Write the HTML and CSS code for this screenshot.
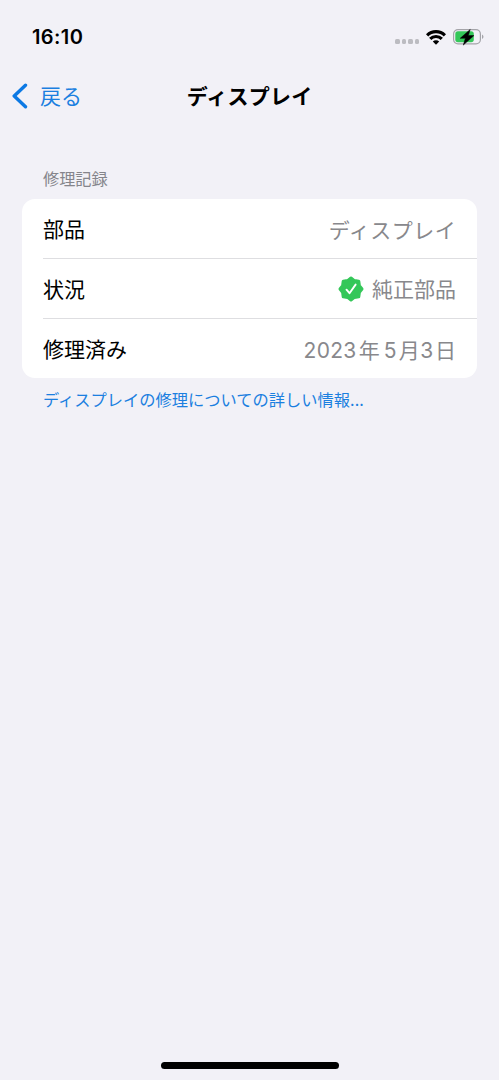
FILE: index.html
```html
<!DOCTYPE html>
<html lang="ja">
<head>
<meta charset="utf-8">
<meta name="viewport" content="width=device-width, initial-scale=1">
<title>ディスプレイ</title>
<link rel="stylesheet" href="styles.css">
</head>
<body>
<div class="screen">
  <header class="status-bar">
    <span class="clock">16:10</span>
    <div class="indicators">
      <span class="signal"><i></i><i></i><i></i><i></i></span>
      <svg class="wifi" width="20" height="15" viewBox="0 0 20 15" fill="none" stroke="#000" stroke-width="3.2">
        <path d="M1.1 5.4a12.6 12.6 0 0 1 17.8 0"/>
        <path d="M4.2 8.9a8.2 8.2 0 0 1 11.6 0"/>
        <path d="M10 14.8 6.8 11.6a4.5 4.5 0 0 1 6.4 0z" fill="#000" stroke="none"/>
      </svg>
      <svg class="battery" width="31" height="18" viewBox="0 0 31 18">
        <rect x=".6" y="1.6" width="26.8" height="14.3" rx="4.4" fill="none" stroke="#a4a4a9" stroke-width="1.2"/>
        <rect x="2.3" y="3.3" width="18.5" height="10.9" rx="2.6" fill="#34c759"/>
        <path d="M29 6.5c2 .9 2 3.6 0 4.5z" fill="#a4a4a9"/>
        <path d="M17.2 1.4 7.2 10.3h5.2l-2.1 6.8 10.6-9.5h-5.6z" fill="#000" stroke="#000" stroke-width=".5" stroke-linejoin="round"/>
      </svg>
    </div>
  </header>
  <nav class="nav-bar">
    <a class="back">
      <svg width="17" height="26" viewBox="0 0 17 26" fill="none" stroke="#0c79e4" stroke-width="3.4" stroke-linecap="round" stroke-linejoin="round"><path d="M13.5 2.2 2.2 13 13.5 23.8"/></svg>
      <span>戻る</span>
    </a>
    <h1 class="title">ディスプレイ</h1>
  </nav>
  <main class="content">
    <h2 class="section-label">修理記録</h2>
    <div class="card">
      <div class="row"><span>部品</span><span class="value kana">ディスプレイ</span></div>
      <div class="row">
        <span>状況</span>
        <span class="value genuine">
          <svg width="26" height="26" viewBox="-13 -13 26 26">
            <path fill="#34c759" stroke="#34c759" stroke-width="3" stroke-linejoin="round" d="M0-11 3.4-8.4 7.8-7.8 8.4-3.4 11 0 8.4 3.4 7.8 7.8 3.4 8.4 0 11-3.4 8.4-7.8 7.8-8.4 3.4-11 0-8.4-3.4-7.8-7.8-3.4-8.4z"/>
            <path d="M-4.5.7-1.5 4.2 4.6-4.4" fill="none" stroke="#fff" stroke-width="1.9" stroke-linecap="round" stroke-linejoin="round"/>
          </svg>
          <span>純正部品</span>
        </span>
      </div>
      <div class="row"><span>修理済み</span><span class="value date"><b>2023</b><span>年</span><b class="month">5</b><span>月</span><b class="day">3</b><span>日</span></span></div>
    </div>
    <a class="more">ディスプレイの修理についての詳しい情報...</a>
  </main>
  <div class="home-indicator"></div>
</div>
</body>
</html>
```
FILE: styles.css
```css
* { box-sizing: border-box; }
body {
  margin: 0;
  background: #f2f1f7;
  color: #000;
  font-family: "Noto Sans CJK JP", sans-serif;
  font-size: 21px;
}
.screen { display: flex; flex-direction: column; height: 1080px; }
.status-bar {
  display: flex;
  justify-content: space-between;
  align-items: center;
  height: 74px;
  padding: 0 15px 0 32px;
}
.clock { font: 600 20px/24px Inter, sans-serif; letter-spacing: .4px; }
.indicators { display: flex; align-items: center; }
.signal { display: flex; gap: 2px; padding-top: 9px; margin-right: 7px; }
.signal i { width: 4.5px; height: 4.5px; border-radius: 1.5px; background: #bcbcc1; }
.wifi { margin-right: 7px; }
.nav-bar {
  display: grid;
  grid-template-columns: 1fr auto 1fr;
  align-items: center;
  height: 44px;
  padding: 0 12px;
}
.back { display: flex; align-items: center; gap: 11px; color: #1b7fe0; line-height: 30px; }
.back span, .title { padding-bottom: 2px; }
.title { margin: 0; font-size: 21px; font-weight: 700; line-height: 30px; letter-spacing: .2px; }
.content { flex: 1; padding: 0 22px; }
.section-label {
  margin: 48px 21px 9px;
  font-size: 16.2px;
  font-weight: 400;
  line-height: 24px;
  color: #85858b;
}
.card { height: 179px; border-radius: 13px; background: #fff; padding-left: 21px; }
.row {
  display: flex;
  align-items: center;
  justify-content: space-between;
  height: 60px;
  padding: 0 21px 0 0;
  border-bottom: 1px solid #dedee1;
}
.row > span:first-child, .genuine span { padding-bottom: 1px; }
.row:last-child { height: 59px; border-bottom: 0; }
.value { color: #88888c; }
.kana { letter-spacing: .5px; margin-right: -.3px; }
.genuine { display: flex; align-items: center; gap: 8px; }
.date { display: flex; align-items: baseline; }
.date b { font: 400 21px Inter, sans-serif; letter-spacing: .3px; margin: 0 2px 0 3px; }
.date .month { margin-left: 4px; }
.date .day { margin: 0 1.5px 0 .5px; }
.more {
  display: block;
  margin: 9px 21px 0;
  font-size: 16.25px;
  line-height: 24px;
  color: #1b7fe0;
}
.home-indicator {
  width: 178px;
  height: 7px;
  margin: 0 auto 11px;
  border-radius: 4px;
  background: #000;
}
```
